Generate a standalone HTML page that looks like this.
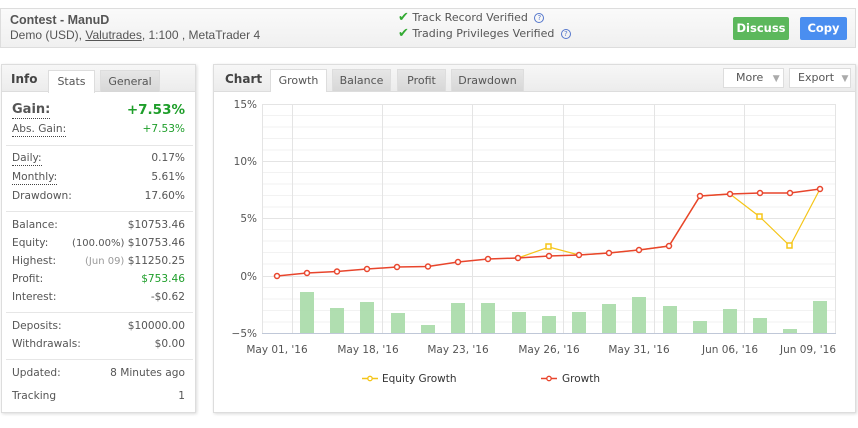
<!DOCTYPE html>
<html><head><meta charset="utf-8"><style>
*{margin:0;padding:0;box-sizing:border-box}
body{width:858px;height:428px;background:#fff;font-family:"DejaVu Sans","Liberation Sans",sans-serif;font-size:11px;color:#555;position:relative;overflow:hidden}
.a{position:absolute;white-space:nowrap}
.hdr{left:0;top:8px;width:856px;height:40px;border:1px solid #ddd;background:linear-gradient(#fafafa,#f0f0f0)}
.btn{top:17px;height:23px;color:#fff;font-weight:bold;font-size:12px;text-align:center;line-height:23px;border-radius:2px}
.panel{border:1px solid #ddd;background:#fff;box-shadow:1px 1px 3px rgba(0,0,0,.15)}
.ph{background:linear-gradient(#f7f7f7,#ececec);border-bottom:1px solid #ddd}
.tab{height:22px;line-height:21px;text-align:center;font-size:11px;color:#555;border:1px solid #ddd;border-bottom:none;background:linear-gradient(#e6e6e6,#d7d7d7)}
.tab.on{background:#fff;height:23px}
.lbl{left:12px;font-size:10.6px;color:#555}
.val{right:673px;font-size:10.6px;color:#555;text-align:right}
.sep{left:6px;width:187px;height:1px;background:#e6e6e6}
.dot{border-bottom:1px dotted #444;padding-bottom:1px}
.g{color:#1e9e2a}
.dd{top:68px;height:20px;border:1px solid #ddd;background:#fff;line-height:18px;font-size:11px;color:#555;padding-left:12px}
.chk{color:#3a3;font-weight:bold;font-size:13px}
.q{display:inline-block;width:10px;height:10px;border:1px solid #57c;border-radius:50%;font-size:7px;line-height:8px;text-align:center;color:#57c;vertical-align:1px;margin-left:3px}
</style></head><body>
<div class="a hdr"></div>
<div class="a" style="left:10px;top:13px;font-size:12.5px;font-weight:bold;color:#555;font-family:'Liberation Sans',sans-serif">Contest - ManuD</div>
<div class="a" style="left:10px;top:28px;font-size:12px;color:#555;font-family:'Liberation Sans',sans-serif">Demo (USD), <u>Valutrades</u>, 1:100 , MetaTrader 4</div>
<div class="a" style="left:398px;top:10px;font-size:11px;color:#555"><span class="chk">✔</span> Track Record Verified <span class="q">?</span></div>
<div class="a" style="left:398px;top:26px;font-size:11px;color:#555"><span class="chk">✔</span> Trading Privileges Verified <span class="q">?</span></div>
<div class="a btn" style="left:733px;width:56px;background:#5cb85c;font-size:11.5px">Discuss</div>
<div class="a btn" style="left:800px;width:47px;background:#4a8ef0;font-size:11.5px">Copy</div>

<div class="a panel" style="left:1px;top:64px;width:195px;height:349px"></div>
<div class="a ph" style="left:2px;top:65px;width:193px;height:27px"></div>
<div class="a" style="left:11px;top:72px;font-weight:bold;font-size:12px;color:#444">Info</div>
<div class="a tab on" style="left:48px;top:70px;width:47px">Stats</div>
<div class="a tab" style="left:100px;top:70px;width:60px">General</div>

<div class="a lbl" style="top:102px;font-size:13px;font-weight:bold"><span class="dot">Gain:</span></div>
<div class="a val g" style="top:102px;font-size:13.5px;font-weight:bold">+7.53%</div>
<div class="a lbl" style="top:123px"><span class="dot">Abs. Gain:</span></div>
<div class="a val g" style="top:123px">+7.53%</div>
<div class="a sep" style="top:145px"></div>
<div class="a lbl" style="top:152px"><span class="dot">Daily:</span></div><div class="a val" style="top:152px">0.17%</div>
<div class="a lbl" style="top:171px"><span class="dot">Monthly:</span></div><div class="a val" style="top:171px">5.61%</div>
<div class="a lbl" style="top:190px">Drawdown:</div><div class="a val" style="top:190px">17.60%</div>
<div class="a sep" style="top:211px"></div>
<div class="a lbl" style="top:219px">Balance:</div><div class="a val" style="top:219px">$10753.46</div>
<div class="a lbl" style="top:237px">Equity:</div><div class="a val" style="top:237px"><span style="font-size:10px">(100.00%)</span> $10753.46</div>
<div class="a lbl" style="top:255px">Highest:</div><div class="a val" style="top:255px"><span style="font-size:10px;color:#999">(Jun 09)</span> $11250.25</div>
<div class="a lbl" style="top:273px">Profit:</div><div class="a val g" style="top:273px">$753.46</div>
<div class="a lbl" style="top:291px">Interest:</div><div class="a val" style="top:291px">-$0.62</div>
<div class="a sep" style="top:312px"></div>
<div class="a lbl" style="top:320px">Deposits:</div><div class="a val" style="top:320px">$10000.00</div>
<div class="a lbl" style="top:338px">Withdrawals:</div><div class="a val" style="top:338px">$0.00</div>
<div class="a sep" style="top:359px"></div>
<div class="a lbl" style="top:367px">Updated:</div><div class="a val" style="top:367px">8 Minutes ago</div>
<div class="a lbl" style="top:390px">Tracking</div><div class="a val" style="top:390px">1</div>

<div class="a panel" style="left:213px;top:64px;width:643px;height:349px"></div>
<div class="a ph" style="left:214px;top:65px;width:641px;height:27px"></div>
<div class="a" style="left:225px;top:72px;font-weight:bold;font-size:12px;color:#444">Chart</div>
<div class="a tab on" style="left:270px;top:69px;width:57px">Growth</div>
<div class="a tab" style="left:332px;top:69px;width:59px">Balance</div>
<div class="a tab" style="left:397px;top:69px;width:49px">Profit</div>
<div class="a tab" style="left:451px;top:69px;width:73px">Drawdown</div>
<div class="a dd" style="left:723px;width:61px">More <span style="color:#aaa;font-size:9px;margin-left:6px">▼</span></div>
<div class="a dd" style="left:789px;width:62px;padding-left:8px">Export <span style="color:#aaa;font-size:9px;margin-left:4px">▼</span></div>

<svg class="a" style="left:0;top:0" width="858" height="428" viewBox="0 0 858 428" font-family="DejaVu Sans,sans-serif" font-size="10.5" fill="#555">
<g stroke="#f2f2f2" stroke-width="1">
<line x1="262" y1="115.5" x2="836" y2="115.5"/><line x1="262" y1="127" x2="836" y2="127"/><line x1="262" y1="138.5" x2="836" y2="138.5"/><line x1="262" y1="150" x2="836" y2="150"/>
<line x1="262" y1="172.5" x2="836" y2="172.5"/><line x1="262" y1="184" x2="836" y2="184"/><line x1="262" y1="195.5" x2="836" y2="195.5"/><line x1="262" y1="207" x2="836" y2="207"/>
<line x1="262" y1="229.5" x2="836" y2="229.5"/><line x1="262" y1="241" x2="836" y2="241"/><line x1="262" y1="252.5" x2="836" y2="252.5"/><line x1="262" y1="264" x2="836" y2="264"/>
<line x1="262" y1="287.5" x2="836" y2="287.5"/><line x1="262" y1="299" x2="836" y2="299"/><line x1="262" y1="310.5" x2="836" y2="310.5"/><line x1="262" y1="322" x2="836" y2="322"/>
</g>
<g stroke="#e4e4e4" stroke-width="1">
<line x1="262" y1="104.5" x2="836" y2="104.5"/><line x1="262" y1="161.5" x2="836" y2="161.5"/><line x1="262" y1="218.5" x2="836" y2="218.5"/><line x1="262" y1="276.5" x2="836" y2="276.5"/>
<line x1="262.5" y1="104" x2="262.5" y2="333"/><line x1="292.5" y1="104" x2="292.5" y2="333"/><line x1="382.5" y1="104" x2="382.5" y2="333"/><line x1="472.5" y1="104" x2="472.5" y2="333"/><line x1="563.5" y1="104" x2="563.5" y2="333"/><line x1="654.5" y1="104" x2="654.5" y2="333"/><line x1="744.5" y1="104" x2="744.5" y2="333"/><line x1="835.5" y1="104" x2="835.5" y2="333"/>
</g>
<line x1="262" y1="333.5" x2="836" y2="333.5" stroke="#c0c8d8"/>
<g fill="#a8dba8" opacity="0.9">
<rect x="300" y="292" width="14" height="41"/><rect x="330" y="308" width="14" height="25"/><rect x="360" y="302" width="14" height="31"/><rect x="391" y="313" width="14" height="20"/><rect x="421" y="325" width="14" height="8"/><rect x="451" y="303" width="14" height="30"/><rect x="481" y="303" width="14" height="30"/><rect x="512" y="312" width="14" height="21"/><rect x="542" y="316" width="14" height="17"/><rect x="572" y="312" width="14" height="21"/><rect x="602" y="304" width="14" height="29"/><rect x="632" y="297" width="14" height="36"/><rect x="663" y="306" width="14" height="27"/><rect x="693" y="321" width="14" height="12"/><rect x="723" y="309" width="14" height="24"/><rect x="753" y="318" width="14" height="15"/><rect x="783" y="329" width="14" height="4"/><rect x="813" y="301" width="14" height="32"/>
</g>
<g text-anchor="end"><text x="257" y="108">15%</text><text x="257" y="165">10%</text><text x="257" y="222">5%</text><text x="257" y="280">0%</text><text x="257" y="337">−5%</text></g>
<g text-anchor="middle"><text x="277" y="353">May 01, '16</text><text x="368" y="353">May 18, '16</text><text x="458" y="353">May 23, '16</text><text x="549" y="353">May 26, '16</text><text x="639" y="353">May 31, '16</text><text x="730" y="353">Jun 06, '16</text><text x="808" y="353">Jun 09, '16</text></g>
<polyline fill="none" stroke="#f5c518" stroke-width="1.2" points="518,258 549,247 579,255 609,253 639,250 669,246 700,196 730,194 760,217 790,246 820,189"/>
<g fill="#fff" stroke="#f5c518" stroke-width="1.5"><rect x="546" y="244" width="5" height="5"/><rect x="757" y="214" width="5" height="5"/><rect x="787" y="243" width="5" height="5"/></g>
<polyline fill="none" stroke="#e8452c" stroke-width="1.5" points="277,276 307,273 337,271.5 367,269 397,267 428,266.5 458,262 488,259 518,258 549,256 579,255 609,253 639,250 669,246 700,196 730,194 760,193 790,193 820,189"/>
<g fill="#fff" stroke="#e8452c" stroke-width="1.5">
<circle cx="277" cy="276" r="2.5"/><circle cx="307" cy="273" r="2.5"/><circle cx="337" cy="271.5" r="2.5"/><circle cx="367" cy="269" r="2.5"/><circle cx="397" cy="267" r="2.5"/><circle cx="428" cy="266.5" r="2.5"/><circle cx="458" cy="262" r="2.5"/><circle cx="488" cy="259" r="2.5"/><circle cx="518" cy="258" r="2.5"/><circle cx="549" cy="256" r="2.5"/><circle cx="579" cy="255" r="2.5"/><circle cx="609" cy="253" r="2.5"/><circle cx="639" cy="250" r="2.5"/><circle cx="669" cy="246" r="2.5"/><circle cx="700" cy="196" r="2.5"/><circle cx="730" cy="194" r="2.5"/><circle cx="760" cy="193" r="2.5"/><circle cx="790" cy="193" r="2.5"/><circle cx="820" cy="189" r="2.5"/>
</g>
<line x1="362" y1="378.5" x2="378" y2="378.5" stroke="#f5c518" stroke-width="1.5"/><circle cx="370" cy="378.5" r="2.2" fill="#fff" stroke="#f5c518" stroke-width="1.3"/>
<text x="382" y="382" fill="#333">Equity Growth</text>
<line x1="541" y1="378.5" x2="557" y2="378.5" stroke="#e8452c" stroke-width="1.5"/><circle cx="549" cy="378.5" r="2.2" fill="#fff" stroke="#e8452c" stroke-width="1.3"/>
<text x="562" y="382" fill="#333">Growth</text>
</svg>
</body></html>
